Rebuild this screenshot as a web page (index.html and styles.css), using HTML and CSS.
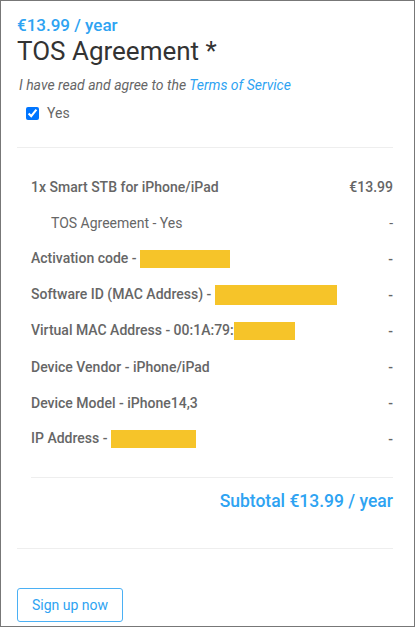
FILE: index.html
```html
<!DOCTYPE html>
<html lang="en">
<head>
  <meta charset="UTF-8" />
  <meta name="viewport" content="width=device-width, initial-scale=1" />
  <title>TOS Agreement</title>
  <link rel="stylesheet" href="styles.css">
</head>
<body>
  <div class="frame">
    <div class="price">€13.99 / year</div>
    <h1 class="title">TOS Agreement *</h1>
    <p class="tos-note">I have read and agree to the <a href="#">Terms of Service</a></p>
    <label class="check">
      <input type="checkbox" checked />
      <span>Yes</span>
    </label>

    <hr class="rule" />

    <div class="summary">
      <div class="line">
        <span>1x Smart STB for iPhone/iPad</span>
        <span>€13.99</span>
      </div>
      <div class="line sub">
        <span>TOS Agreement - Yes</span>
        <span>-</span>
      </div>
      <div class="line">
        <span>Activation code - <mark class="hide w90"></mark></span>
        <span>-</span>
      </div>
      <div class="line">
        <span>Software ID (MAC Address) - <mark class="hide w122 tall"></mark></span>
        <span>-</span>
      </div>
      <div class="line">
        <span>Virtual MAC Address - 00:1A:79:<mark class="hide w61"></mark></span>
        <span>-</span>
      </div>
      <div class="line">
        <span>Device Vendor - iPhone/iPad</span>
        <span>-</span>
      </div>
      <div class="line">
        <span>Device Model - iPhone14,3</span>
        <span>-</span>
      </div>
      <div class="line">
        <span>IP Address - <mark class="hide w85"></mark></span>
        <span>-</span>
      </div>

      <hr class="rule inner" />

      <div class="subtotal">Subtotal €13.99 / year</div>
    </div>

    <hr class="rule" />

    <button class="signup">Sign up now</button>
  </div>
</body>
</html>
```

FILE: styles.css
```css
* {
  box-sizing: border-box;
}

body {
  margin: 0;
  font-family: Roboto, "Liberation Sans", sans-serif;
  color: #333;
  background: #fff;
}

.frame {
  height: 627px;
  border: 1px solid #777;
  padding: 12px 21px 0 16px;
}

.price {
  font-size: 17px;
  line-height: 24px;
  font-weight: 500;
  color: #2ea3f2;
}

.title {
  margin: 0;
  font-size: 26px;
  line-height: 28px;
  font-weight: 400;
  color: #333;
}

.tos-note {
  margin: 10px 0 0;
  font-size: 14px;
  line-height: 20px;
  font-style: italic;
  color: #666;
  padding-left: 2px;
}

.tos-note a {
  color: #2ea3f2;
  text-decoration: none;
}

.check {
  display: flex;
  align-items: center;
  height: 20px;
  margin-top: 8px;
  padding-left: 5px;
  font-size: 14px;
  color: #666;
}

.check input {
  margin: 0 8px 0 4px;
  width: 13px;
  height: 13px;
}

.rule {
  margin: 24px 0 0;
  border: 0;
  border-top: 1px solid #eee;
}

.summary {
  padding: 21px 0 0 14px;
}

.line {
  display: flex;
  justify-content: space-between;
  align-items: center;
  height: 36px;
  font-size: 14px;
  font-weight: 500;
  color: #666;
}

.line.sub {
  padding-left: 20px;
  font-weight: 400;
}

.hide {
  display: inline-block;
  vertical-align: middle;
  height: 18px;
  background: #f6c429;
}

.hide.tall {
  height: 20px;
}

.w90 { width: 90px; }
.w122 { width: 122px; }
.w61 { width: 61px; }
.w85 { width: 85px; }

.rule.inner {
  margin-top: 20px;
}

.subtotal {
  margin-top: 10px;
  text-align: right;
  font-size: 17.5px;
  line-height: 26px;
  font-weight: 500;
  color: #2ea3f2;
}

.summary + .rule {
  margin-top: 34px;
}

.signup {
  margin: 39px 0 0;
  width: 106px;
  height: 34px;
  padding: 0;
  background: #fff;
  border: 1px solid #4bb0f4;
  border-radius: 3px;
  font-family: Roboto, "Liberation Sans", sans-serif;
  font-size: 14px;
  color: #2ea3f2;
  cursor: pointer;
}
```
